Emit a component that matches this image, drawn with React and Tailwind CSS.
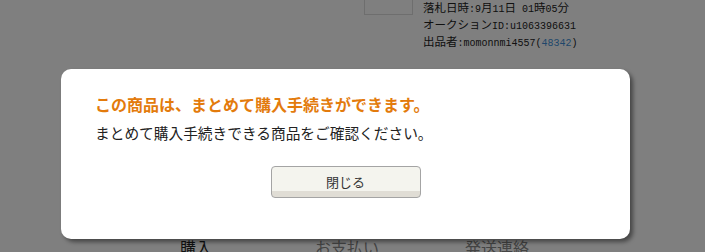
const mono = "font-['Liberation_Mono',monospace] text-[10px]";

export default function App() {
  return (
    <div className="relative w-[705px] h-[252px] overflow-hidden bg-white text-[#222] font-['Noto_Sans_CJK_JP','Noto_Sans',sans-serif]">
      {/* page behind the dialog */}
      <div className="flex pl-[364px]">
        <div className="w-[49px] h-[50px] -mt-[35px] border border-[#ddd] bg-white" />
        <div className="pl-[10px] text-[11.5px] leading-[14px]">
          <p>
            落札日時<span className={mono}>:9</span>月<span className={mono}>11</span>日
            <span className={mono}> 01</span>時<span className={mono}>05</span>分
          </p>
          <p>
            オークション<span className={mono}>ID:u1063396631</span>
          </p>
          <p>
            出品者<span className={mono}>:momonnmi4557(</span>
            <span className={`${mono} text-[#3f8fd6]`}>48342</span>
            <span className={mono}>)</span>
          </p>
        </div>
      </div>
      <div className="flex pl-[180px] mt-[187px] text-[16px] leading-[18px]">
        <span className="w-[135px] text-[#222]">購入</span>
        <span className="w-[150px] text-[#888]">お支払い</span>
        <span className="text-[#888]">発送連絡</span>
      </div>

      {/* overlay */}
      <div className="absolute inset-0 bg-black/50" />

      {/* dialog */}
      <div className="absolute left-[61px] top-[69px] w-[569px] h-[170px] rounded-[10px] bg-white shadow-[3px_3px_4px_rgba(0,0,0,0.45)] pl-[34px] pt-[25px]">
        <h2 className="text-[16px] leading-[20px] font-bold text-[#e37b0c]">
          この商品は、まとめて購入手続きができます。
        </h2>
        <p className="mt-[9px] text-[14.7px] leading-[20px] text-[#222]">
          まとめて購入手続きできる商品をご確認ください。
        </p>
        <div className="flex justify-center pr-[34px] mt-[23px]">
          <button className="w-[150px] h-[32px] rounded-[4px] border border-[#a4a4a4] bg-[linear-gradient(to_bottom,#f4f4ee_80%,#e0ddd5_80%)] text-[13px] text-[#333]">
            閉じる
          </button>
        </div>
      </div>
    </div>
  );
}
